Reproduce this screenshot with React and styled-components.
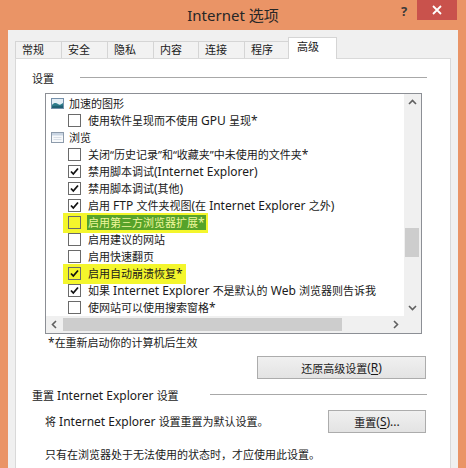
import React from 'react'
import styled, { createGlobalStyle } from 'styled-components'

const GlobalStyle = createGlobalStyle`
    html, body {
        margin: 0;
        padding: 0;
        background: #ea9466;
    }
    #root {
        height: 468px;
        overflow: hidden;
    }
`

const tabs = [
    { label: '常规', width: 47 },
    { label: '安全', width: 47 },
    { label: '隐私', width: 47 },
    { label: '内容', width: 46 },
    { label: '连接', width: 47 },
    { label: '程序', width: 45 },
    { label: '高级', width: 49, active: true },
]

// group => tree folder row, otherwise a checkbox item
const rows = [
    { group: 'gfx', text: '加速的图形' },
    { checked: false, text: '使用软件呈现而不使用 GPU 呈现*' },
    { group: 'browse', text: '浏览' },
    { checked: false, text: '关闭“历史记录”和“收藏夹”中未使用的文件夹*' },
    { checked: true, text: '禁用脚本调试(Internet Explorer)' },
    { checked: true, text: '禁用脚本调试(其他)' },
    { checked: true, text: '启用 FTP 文件夹视图(在 Internet Explorer 之外)' },
    { checked: false, text: '启用第三方浏览器扩展*', mark: 'selected' },
    { checked: false, text: '启用建议的网站' },
    { checked: false, text: '启用快速翻页' },
    { checked: true, text: '启用自动崩溃恢复*', mark: 'plain' },
    { checked: true, text: '如果 Internet Explorer 不是默认的 Web 浏览器则告诉我' },
    { checked: false, text: '使网站可以使用搜索窗格*' },
]

// latin runs render a bit bigger than the CJK glyphs, like YaHei UI does
function Txt({ children }) {
    const parts = children.split(/([\x20-\x7e]+)/)
    return parts.map((p, i) => (i % 2 ? <Latin key={i}>{p}</Latin> : p))
}

function GfxIcon() {
    return (
        <svg width="13" height="11" viewBox="0 0 13 11">
            <rect x="0.5" y="0.5" width="12" height="10" fill="#e4eef6" stroke="#7590aa" />
            <path d="M1 7 C3 4.5 5 4.5 7 6 C9 7.5 10.5 6 12 5 L12 10 L1 10 Z" fill="#2f7d8c" />
            <path d="M1 8.5 C4 7 7 8.5 12 7.5 L12 10 L1 10 Z" fill="#1f5f72" />
        </svg>
    )
}

function BrowseIcon() {
    return (
        <svg width="13" height="11" viewBox="0 0 13 11">
            <rect x="0.5" y="0.5" width="12" height="10" fill="#f7f9fb" stroke="#8d9bab" />
            <rect x="1" y="1" width="11" height="2.5" fill="#c9d5e3" />
            <line x1="2.5" y1="5.5" x2="10.5" y2="5.5" stroke="#d8dee6" />
            <line x1="2.5" y1="7.5" x2="10.5" y2="7.5" stroke="#d8dee6" />
        </svg>
    )
}

function Check({ checked, bg }) {
    return (
        <CheckBox bg={bg}>
            {checked && (
                <svg width="11" height="11" viewBox="0 0 11 11">
                    <path d="M2 5.5 L4.3 8 L9 2.5" fill="none" stroke="#111" strokeWidth="1.8" />
                </svg>
            )}
        </CheckBox>
    )
}

function Chevron({ dir }) {
    const d = {
        up: 'M1 5 L4.5 1.5 L8 5',
        down: 'M1 2 L4.5 5.5 L8 2',
        left: 'M5 1 L1.5 4.5 L5 8',
        right: 'M2 1 L5.5 4.5 L2 8',
    }[dir]
    const vertical = dir === 'up' || dir === 'down'
    return (
        <svg width={vertical ? 9 : 7} height={vertical ? 7 : 9} viewBox={vertical ? '0 0 9 7' : '0 0 7 9'}>
            <path d={d} fill="none" stroke="#606060" strokeWidth="1.6" />
        </svg>
    )
}

function TreeRow({ row }) {
    if (row.group) {
        return (
            <Row>
                <GroupLine>
                    {row.group === 'gfx' ? <GfxIcon /> : <BrowseIcon />}
                    <span>{row.text}</span>
                </GroupLine>
            </Row>
        )
    }
    return (
        <Row>
            <ItemLine>
                <Mark on={!!row.mark}>
                    <Check checked={row.checked} bg={row.mark ? '#f4f62c' : '#fff'} />
                    <Label selected={row.mark === 'selected'}><Txt>{row.text}</Txt></Label>
                </Mark>
            </ItemLine>
        </Row>
    )
}

export default function App() {
    return (
        <>
            <GlobalStyle />
            <Window>
                <TitleBar>
                    <Title>Internet 选项</Title>
                    <Caption>
                        <HelpButton>?</HelpButton>
                        <CloseButton>
                            <svg width="10" height="10" viewBox="0 0 10 10">
                                <path d="M1 1 L9 9 M9 1 L1 9" stroke="#fff" strokeWidth="1.8" />
                            </svg>
                        </CloseButton>
                    </Caption>
                </TitleBar>

                <Body>
                    <Tabs>
                        {tabs.map(t => (
                            <Tab key={t.label} w={t.width} active={t.active}>{t.label}</Tab>
                        ))}
                    </Tabs>

                    <Panel>
                        <SectionHead gap={26}>
                            <span>设置</span>
                            <Rule />
                        </SectionHead>

                        <ListBox>
                            <ListContent>
                                {rows.map((row, i) => <TreeRow key={i} row={row} />)}
                            </ListContent>
                            <VScroll>
                                <ArrowCell><Chevron dir="up" /></ArrowCell>
                                <VTrack>
                                    <VThumb top={117} h={29} />
                                </VTrack>
                                <ArrowCell><Chevron dir="down" /></ArrowCell>
                            </VScroll>
                            <HScroll>
                                <ArrowCell><Chevron dir="left" /></ArrowCell>
                                <HTrack>
                                    <HThumb w={279} />
                                </HTrack>
                                <ArrowCell><Chevron dir="right" /></ArrowCell>
                            </HScroll>
                            <Corner />
                        </ListBox>

                        <Note><Txt>*在重新启动你的计算机后生效</Txt></Note>

                        <ButtonRow>
                            <Button w={169}>还原高级设置<Latin>(<u>R</u>)</Latin></Button>
                        </ButtonRow>

                        <SectionHead gap={31} top={8}>
                            <span><Txt>重置 Internet Explorer 设置</Txt></span>
                            <Rule />
                        </SectionHead>

                        <ResetRow>
                            <span><Txt>将 Internet Explorer 设置重置为默认设置。</Txt></span>
                            <Button w={98}>重置<Latin>(<u>S</u>)...</Latin></Button>
                        </ResetRow>

                        <Hint>只有在浏览器处于无法使用的状态时，才应使用此设置。</Hint>
                    </Panel>
                </Body>
            </Window>
        </>
    )
}

const font = `"Noto Sans", "Noto Sans CJK SC", sans-serif`

const Window = styled.div`
    height: 468px;
    display: flex;
    flex-direction: column;
    background: #ea9466;
    padding: 0 8px;
    box-sizing: border-box;
    font-family: ${font};
    font-size: 11px;
    color: #1a1a1a;
`

const Latin = styled.span`
    font-size: 12px;
`

const TitleBar = styled.div`
    height: 30px;
    flex: none;
    display: grid;
    grid-template-columns: 1fr auto 1fr;
    align-items: start;
`

const Title = styled.div`
    grid-column: 2;
    line-height: 30px;
    font-size: 15px;
    color: #262626;
`

const Caption = styled.div`
    justify-self: end;
    display: flex;
    align-items: flex-start;
    margin-right: 1px;
`

const HelpButton = styled.div`
    width: 26px;
    height: 20px;
    padding-top: 2px;
    box-sizing: border-box;
    text-align: center;
    font-size: 13px;
    font-weight: bold;
    line-height: 18px;
    color: #3a3a3a;
`

const CloseButton = styled.div`
    width: 40px;
    height: 20px;
    background: #c9524c;
    display: flex;
    align-items: center;
    justify-content: center;
`

const Body = styled.div`
    flex: 1;
    background: #f0f0f0;
    padding: 7px 7px 0;
    display: flex;
    flex-direction: column;
    min-height: 0;
`

const Tabs = styled.div`
    display: flex;
    align-items: flex-end;
    height: 21px;
    flex: none;
`

const Tab = styled.div`
    width: ${p => p.w}px;
    height: ${p => p.active ? 22 : 17}px;
    box-sizing: border-box;
    margin-right: -1px;
    margin-bottom: ${p => p.active ? -1 : 0}px;
    padding-left: ${p => p.active ? 8 : 6}px;
    border: 1px solid #d5d5d5;
    border-bottom: none;
    background: ${p => p.active ? '#fff' : '#f2f2f2'};
    line-height: ${p => p.active ? 18 : 15}px;
    position: relative;
    z-index: ${p => p.active ? 1 : 0};
    flex: none;
`

const Panel = styled.div`
    flex: 1;
    background: #fff;
    border: 1px solid #d9d9d9;
    border-bottom: none;
    display: flex;
    flex-direction: column;
`

const SectionHead = styled.div`
    display: flex;
    align-items: center;
    height: 16px;
    margin-top: ${p => p.top ?? 11}px;
    padding-left: 16px;
    padding-right: 23px;
    white-space: nowrap;
    > span { margin-right: ${p => p.gap}px; }
`

const Rule = styled.div`
    flex: 1;
    height: 1px;
    background: #a8a8a8;
    margin-top: -2px;
`

const ListBox = styled.div`
    margin: 7px 0 0 29px;
    width: 377px;
    height: 241px;
    box-sizing: border-box;
    border: 1px solid #8c8f95;
    display: grid;
    grid-template-columns: 1fr 17px;
    grid-template-rows: 1fr 17px;
    flex: none;
`

const ListContent = styled.div`
    overflow: hidden;
    padding-top: 1px;
    white-space: nowrap;
    background: #fff;
`

const Row = styled.div`
    height: 17px;
    line-height: 17px;
    display: flex;
    align-items: center;
`

const GroupLine = styled.div`
    display: flex;
    align-items: center;
    gap: 5px;
    padding-left: 5px;
    svg { flex: none; }
`

const ItemLine = styled.div`
    padding-left: 22px;
    display: flex;
    align-items: center;
`

const Mark = styled.div`
    display: flex;
    align-items: center;
    gap: 7px;
    background: ${p => p.on ? '#f4f62c' : 'transparent'};
    padding: ${p => p.on ? '2px 2px 3px 5px' : '0'};
    margin: ${p => p.on ? '-2px -2px -3px -5px' : '0'};
`

const CheckBox = styled.div`
    width: 13px;
    height: 13px;
    box-sizing: border-box;
    border: 1px solid #6a6a6a;
    background: ${p => p.bg};
    display: flex;
    align-items: center;
    justify-content: center;
    flex: none;
`

const Label = styled.span`
    line-height: 15px;
    padding: 0 1px;
    margin-left: -1px;
    background: ${p => p.selected ? '#56a22a' : 'transparent'};
    color: ${p => p.selected ? '#eef79a' : 'inherit'};
`

const VScroll = styled.div`
    background: #f0f0f0;
    display: flex;
    flex-direction: column;
`

const ArrowCell = styled.div`
    width: 17px;
    height: 17px;
    display: flex;
    align-items: center;
    justify-content: center;
    flex: none;
`

const VTrack = styled.div`
    flex: 1;
    position: relative;
`

const VThumb = styled.div`
    position: absolute;
    left: 1px;
    right: 2px;
    top: ${p => p.top}px;
    height: ${p => p.h}px;
    background: #cdcdcd;
`

const HScroll = styled.div`
    background: #f0f0f0;
    display: flex;
`

const HTrack = styled.div`
    flex: 1;
    display: flex;
    align-items: center;
`

const HThumb = styled.div`
    width: ${p => p.w}px;
    height: 13px;
    margin-top: -1px;
    background: #cdcdcd;
`

const Corner = styled.div`
    background: #f0f0f0;
`

const Note = styled.div`
    margin: 1px 0 0 32px;
    height: 16px;
    line-height: 16px;
`

const ButtonRow = styled.div`
    display: flex;
    justify-content: flex-end;
    padding-right: 24px;
    margin-top: 5px;
`

const Button = styled.div`
    width: ${p => p.w}px;
    height: 23px;
    box-sizing: border-box;
    border: 1px solid #acacac;
    background: linear-gradient(#f0f0f0, #e3e3e3);
    display: flex;
    align-items: center;
    justify-content: center;
    flex: none;
    u { text-underline-offset: 2px; }
`

const ResetRow = styled.div`
    display: flex;
    align-items: center;
    justify-content: space-between;
    margin-top: 7px;
    padding: 0 24px 0 29px;
    white-space: nowrap;
`

const Hint = styled.div`
    margin: 14px 0 0 29px;
    height: 16px;
    line-height: 16px;
    white-space: nowrap;
`
